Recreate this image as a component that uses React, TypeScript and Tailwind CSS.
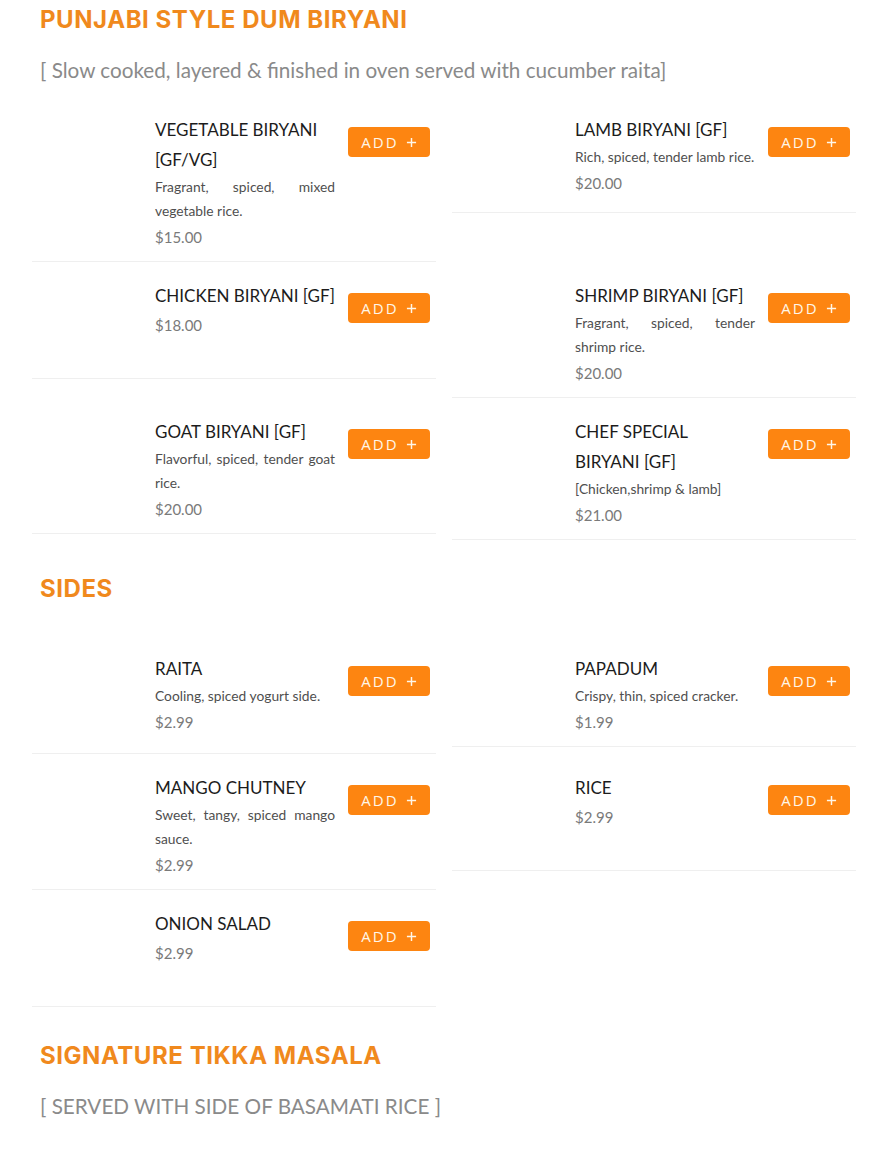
import React from 'react'

// ─── Types ────────────────────────────────────────────────────────────────────

interface MenuItem {
  name: string
  desc?: string
  price: string
  minH?: string
}

interface MenuSection {
  title: string
  subtitle?: string
  rows: (MenuItem | null)[][]
}

// ─── Data ─────────────────────────────────────────────────────────────────────

const SECTIONS: MenuSection[] = [
  {
    title: 'PUNJABI STYLE DUM BIRYANI',
    subtitle: '[ Slow cooked, layered & finished in oven served with cucumber raita]',
    rows: [
      [
        { name: 'VEGETABLE BIRYANI [GF/VG]', desc: 'Fragrant, spiced, mixed vegetable rice.', price: '$15.00' },
        { name: 'LAMB BIRYANI [GF]', desc: 'Rich, spiced, tender lamb rice.', price: '$20.00' },
      ],
      [
        { name: 'CHICKEN BIRYANI [GF]', price: '$18.00' },
        { name: 'SHRIMP BIRYANI [GF]', desc: 'Fragrant, spiced, tender shrimp rice.', price: '$20.00' },
      ],
      [
        { name: 'GOAT BIRYANI [GF]', desc: 'Flavorful, spiced, tender goat rice.', price: '$20.00' },
        { name: 'CHEF SPECIAL BIRYANI [GF]', desc: '[Chicken,shrimp & lamb]', price: '$21.00' },
      ],
    ],
  },
  {
    title: 'SIDES',
    rows: [
      [
        { name: 'RAITA', desc: 'Cooling, spiced yogurt side.', price: '$2.99', minH: 'min-h-[119px]' },
        { name: 'PAPADUM', desc: 'Crispy, thin, spiced cracker.', price: '$1.99', minH: 'min-h-[112px]' },
      ],
      [
        { name: 'MANGO CHUTNEY', desc: 'Sweet, tangy, spiced mango sauce.', price: '$2.99' },
        { name: 'RICE', price: '$2.99' },
      ],
      [{ name: 'ONION SALAD', price: '$2.99' }, null],
    ],
  },
  {
    title: 'SIGNATURE TIKKA MASALA',
    subtitle: '[ SERVED WITH SIDE OF BASAMATI RICE ]',
    rows: [
      [
        { name: 'CHICKEN TIKKA MASALA', desc: 'Creamy, spiced, tender chicken.', price: '$18.00' },
        { name: 'PANEER TIKKA MASALA', desc: 'Creamy, spiced cottage cheese.', price: '$17.00' },
      ],
    ],
  },
]

// ─── Card ─────────────────────────────────────────────────────────────────────

function ItemCard({ item }: { item: MenuItem }) {
  return (
    <div
      className={`flex items-start pt-[19px] pb-[10px] pr-[6px] border-b border-[#efefef] ${item.minH ?? 'min-h-[117px]'}`}
    >
      {/* image slot (no picture loaded) */}
      <div className="w-[123px] shrink-0" />
      <div className="flex-1 min-w-0">
        <div className="text-[17px] leading-[30px] text-[#1c1c1c]">{item.name}</div>
        {item.desc && (
          <p className="text-[13.8px] leading-[24px] text-[#4f4f4f] text-justify">{item.desc}</p>
        )}
        <div className="text-[15px] leading-[28px] text-[#7a7a7a]">{item.price}</div>
      </div>
      <button className="ml-[13px] mt-3 w-[82px] h-[30px] shrink-0 rounded-[4px] bg-[#fd8511] text-[#fff6e8] text-[15px] tracking-[2px] font-['Open_Sans',sans-serif] flex items-center justify-center gap-[7px]">
        <span>ADD</span>
        <svg width="11" height="11" viewBox="0 0 12 12" stroke="currentColor" strokeWidth="1.6" fill="none">
          <path d="M6 1v10M1 6h10" />
        </svg>
      </button>
    </div>
  )
}

// ─── Section ──────────────────────────────────────────────────────────────────

function Section({ section }: { section: MenuSection }) {
  return (
    <section>
      <h2
        className={`px-2 text-[24px] leading-[30px] font-bold text-[#f0891d] tracking-[0.55px] font-['Inter',sans-serif] ${
          section.subtitle ? 'mb-5' : 'mb-[31px]'
        }`}
      >
        {section.title}
      </h2>
      {section.subtitle && (
        <p className="px-2 mb-[11px] text-[20.7px] leading-[30px] text-[#8a8a8a]">{section.subtitle}</p>
      )}
      <div className="grid grid-cols-2 gap-x-4 items-start">
        {section.rows.flatMap((row, ri) =>
          row.map((item, ci) => (item ? <ItemCard key={`${ri}-${ci}`} item={item} /> : <div key={`${ri}-${ci}`} />))
        )}
      </div>
    </section>
  )
}

// ─── App ──────────────────────────────────────────────────────────────────────

export default function App() {
  return (
    <div className="min-h-screen bg-white font-['Lato',sans-serif]">
      <div className="w-[824px] ml-8 pt-[5px] flex flex-col gap-[34px]">
        {SECTIONS.map(s => (
          <Section key={s.title} section={s} />
        ))}
      </div>
    </div>
  )
}
